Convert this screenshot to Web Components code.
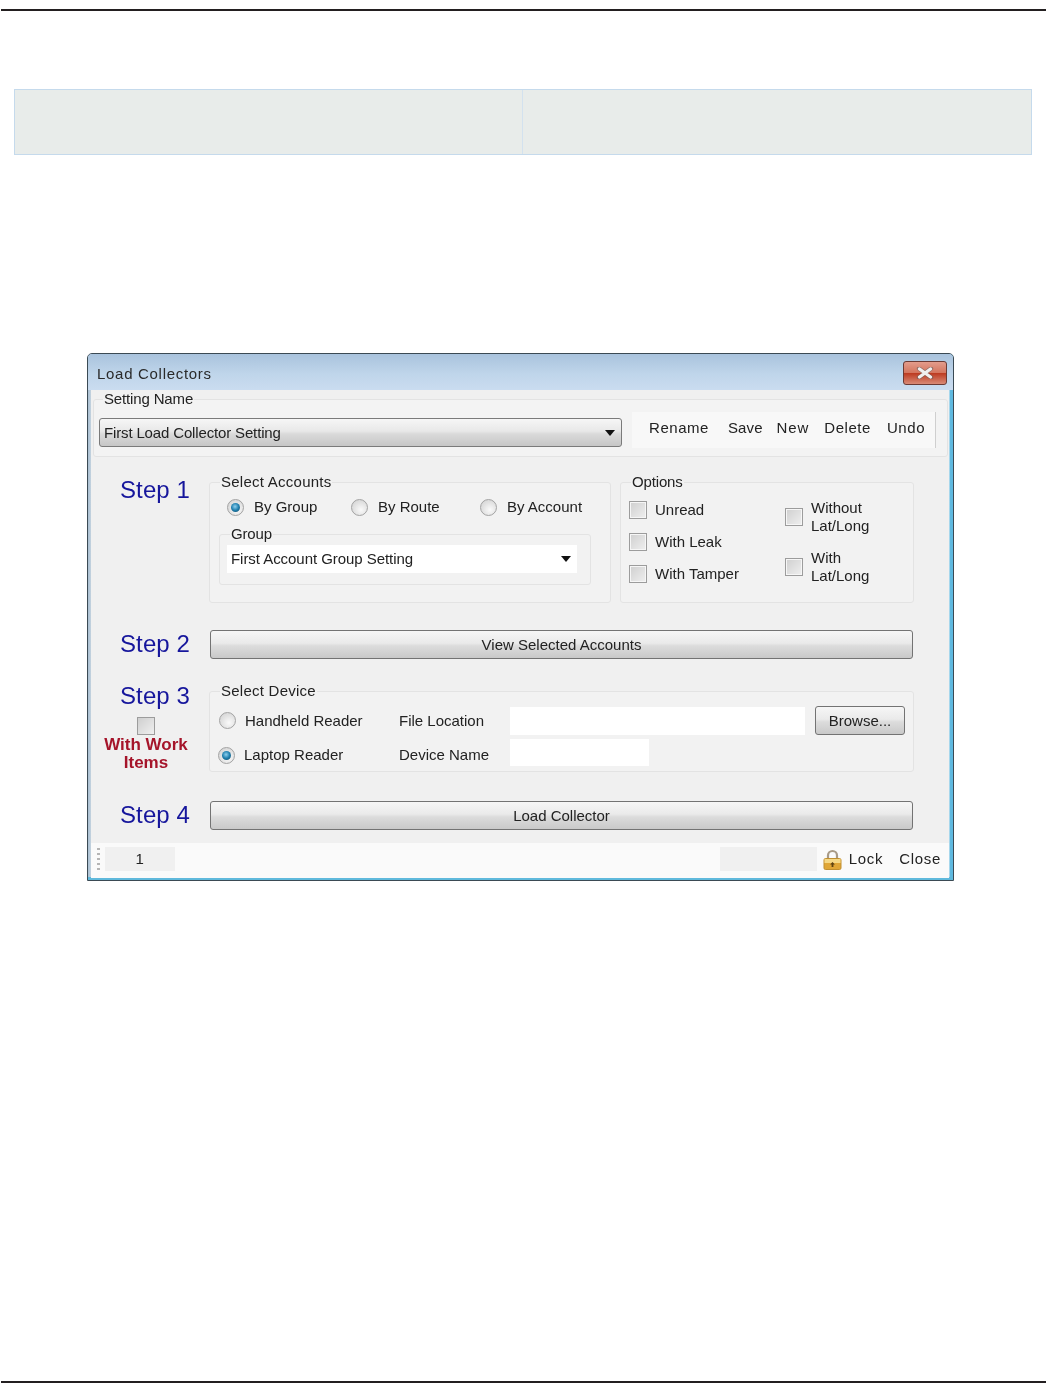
<!DOCTYPE html>
<html lang="en">
<head>
<meta charset="utf-8">
<title>Load Collectors</title>
<style>
  html, body { margin: 0; background: #fff; }
  body { font: 15px/18px "Liberation Sans", Arial, sans-serif; color: #222; }
</style>
</head>
<body>
<doc-page>
  <doc-table></doc-table>
  <lc-window title="Load Collectors">
    <lc-setting-bar></lc-setting-bar>
    <lc-steps></lc-steps>
    <lc-status></lc-status>
  </lc-window>
</doc-page>

<script>
// Small helper so every element below stays short
function shadow(el, html) {
  el.attachShadow({ mode: "open" }).innerHTML = html;
}

// Page with the two rules of the manual page
class DocPage extends HTMLElement {
  constructor() {
    super();
    shadow(this, `
      <style>
        :host { display: flex; flex-direction: column; height: 1383px; box-sizing: border-box; padding-top: 9px; }
        .rule { height: 2px; background: #231f20; margin-left: 1px; flex: none; }
        .body { flex: 1; }
      </style>
      <div class="rule"></div>
      <div class="body"><slot></slot></div>
      <div class="rule"></div>
    `);
  }
}

// Empty two cell table above the screenshot
class DocTable extends HTMLElement {
  constructor() {
    super();
    shadow(this, `
      <style>
        :host {
          display: grid; grid-template-columns: 507px 1fr; height: 66px; box-sizing: border-box;
          margin: 78px 14px 0 14px; background: #e8ecea;
          border: 1px solid #c5daec;
        }
        div + div { border-left: 1px solid #d3e2ef; }
      </style>
      <div></div><div></div>
    `);
  }
}

// Aero style window frame
class LcWindow extends HTMLElement {
  constructor() {
    super();
    const title = this.getAttribute("title") || "";
    shadow(this, `
      <style>
        :host {
          display: block; width: 867px; height: 528px; box-sizing: border-box;
          margin: 198px 0 0 87px; padding: 0 4px 3px 3px;
          border: 1px solid #3b4a54; border-radius: 5px 5px 0 0;
          background: linear-gradient(90deg, #a9bfd2 0, #c4d3df 3px, #eef5f9 calc(100% - 4px), #5fb9e0 calc(100% - 3px), #5fb9e0 100%);
          box-shadow: inset 0 -3px 0 #5fb9dc;
          filter: blur(0.5px);
        }
        .bar {
          height: 36px; display: flex; align-items: center; justify-content: space-between;
          margin: 0 -4px 0 -3px; padding: 3px 6px 0 9px; box-sizing: border-box;
          background: linear-gradient(#a9c3dd, #bfd5ea 55%, #cadcf0);
          border-radius: 4px 4px 0 0;
          letter-spacing: 0.7px; color: #2a2a2a;
        }
        .x {
          width: 44px; height: 24px; box-sizing: border-box; margin-top: -2px;
          display: flex; align-items: center; justify-content: center;
          border: 1px solid #6b3a34; border-radius: 3px;
          background: linear-gradient(#e39c8c, #d4765f 48%, #bd3c22 52%, #d98a76);
        }
        .client { background: #f0f0f0; height: 488px; display: flex; flex-direction: column; }
      </style>
      <div class="bar">
        <span>${title}</span>
        <span class="x"><svg width="18" height="12" viewBox="0 0 18 12"><path d="M3 1.5 L15 10.5 M15 1.5 L3 10.5" stroke="#5a5a5a" stroke-width="4.4" stroke-linecap="round" opacity=".55"/><path d="M3.5 2 L14.5 10 M14.5 2 L3.5 10" stroke="#f0f0f0" stroke-width="3.2" stroke-linecap="round"/></svg></span>
      </div>
      <div class="client"><slot></slot></div>
    `);
  }
}

// Fieldset with a legend on its top border
class LcGroup extends HTMLElement {
  constructor() {
    super();
    shadow(this, `
      <style>
        :host { display: block; box-sizing: border-box; }
        fieldset {
          margin: 0; height: 100%; box-sizing: border-box; min-width: 0;
          padding: var(--group-padding, 0);
          border: 1px solid #e3e3e3; border-radius: 3px;
          background: var(--group-bg, #f2f2f2);
        }
        legend {
          padding: 0 1px; margin-left: var(--legend-margin, 10px); line-height: 18px;
          letter-spacing: var(--legend-spacing, -0.15px);
        }
      </style>
      <fieldset>
        <legend>${this.getAttribute("label") || ""}</legend>
        <slot></slot>
      </fieldset>
    `);
  }
}

class LcRadio extends HTMLElement {
  constructor() {
    super();
    shadow(this, `
      <style>
        :host { display: flex; align-items: center; gap: var(--radio-gap, 10px); height: 18px; white-space: nowrap; }
        i {
          width: 17px; height: 17px; box-sizing: border-box; border-radius: 50%; flex: none;
          border: 1px solid #a3a3a3; display: flex; align-items: center; justify-content: center;
          background: radial-gradient(circle at 60% 65%, #fafafa, #d4d4d4 85%);
        }
        b { width: 9px; height: 9px; border-radius: 50%; background: radial-gradient(circle at 45% 40%, #8fd0ee, #1f7fae 50%, #12455f); }
      </style>
      <i>${this.hasAttribute("checked") ? "<b></b>" : ""}</i><span><slot></slot></span>
    `);
  }
}

class LcCheck extends HTMLElement {
  constructor() {
    super();
    shadow(this, `
      <style>
        :host { display: flex; align-items: center; gap: 8px; white-space: nowrap; }
        i {
          width: 18px; height: 18px; box-sizing: border-box; flex: none;
          border: 1px solid #9c9c9c; outline: 1px solid #f6f6f6; outline-offset: -2px;
          background: linear-gradient(135deg, #cfcfcf, #efefef);
        }
      </style>
      <i></i><span><slot></slot></span>
    `);
  }
}

class LcButton extends HTMLElement {
  constructor() {
    super();
    shadow(this, `
      <style>
        :host {
          display: flex; align-items: center; justify-content: center; box-sizing: border-box;
          height: 29px; border: 1px solid #737373; border-radius: 3px;
          background: linear-gradient(#f6f6f6, #eaeaea 45%, #dcdcdc 55%, #c9c9c9);
        }
      </style>
      <slot></slot>
    `);
  }
}

class LcCombo extends HTMLElement {
  constructor() {
    super();
    shadow(this, `
      <style>
        :host {
          display: flex; align-items: center; justify-content: space-between; box-sizing: border-box;
          height: 29px; padding: 0 6px 0 4px; border: 1px solid #7a7a7a; border-radius: 3px;
          letter-spacing: -0.15px;
          background: linear-gradient(#f6f6f6, #e8e8e8 45%, #dadada 55%, #c6c6c6);
        }
        :host([flat]) { border: 0; border-radius: 0; background: #fff; height: 28px; letter-spacing: -0.05px; }
        i { width: 0; height: 0; border: 5px solid transparent; border-top: 6px solid #111; border-bottom: 0; }
      </style>
      <span><slot></slot></span><i></i>
    `);
  }
}

// Top panel, setting name plus its tool strip
class LcSettingBar extends HTMLElement {
  constructor() {
    super();
    shadow(this, `
      <style>
        :host {
          display: block; margin: 0 0 0 2px; width: 855px;
          --group-bg: #f3f3f3; --group-padding: 4px 0 8px 5px; --legend-margin: 4px;
        }
        .row { display: flex; gap: 10px; }
        lc-combo { width: 523px; margin-top: 6px; }
        .strip {
          width: 304px; height: 36px; box-sizing: border-box; padding: 0 0 4px 3px;
          display: flex; align-items: center; background: #f8f8f8;
          letter-spacing: 0.55px; border-right: 1px solid #cfcfcf;
        }
        .grip { width: 3px; height: 22px; margin-right: 14px; background: repeating-linear-gradient(#b5b5b5 0 2px, transparent 2px 5px); }
        span { margin-right: 16px; }
        .rename { margin-right: 19px; }
        .save { margin-right: 14px; letter-spacing: 0.1px; }
        .new { letter-spacing: 0.9px; margin-right: 15px; }
      </style>
      <lc-group label="Setting Name">
        <div class="row">
          <lc-combo>First Load Collector Setting</lc-combo>
          <div class="strip">
            <div class="grip"></div>
            <span class="rename">Rename</span><span class="save">Save</span><span class="new">New</span><span>Delete</span><span>Undo</span>
          </div>
        </div>
      </lc-group>
    `);
  }
}

// The four numbered steps
class LcSteps extends HTMLElement {
  constructor() {
    super();
    shadow(this, `
      <style>
        :host {
          display: grid; grid-template-columns: 118px 705px; flex: 1; align-content: start;
          padding-top: 16px;
        }
        .step { font-size: 24px; letter-spacing: 0.1px; color: #16169c; padding-left: 29px; white-space: nowrap; }
        .s1 { line-height: 34px; }
        .s2 { line-height: 27px; }
        .s3 { line-height: 28px; }
        .gap2 { margin-top: 27px; }
        .gap3 { margin-top: 23px; }
        .gap4 { margin-top: 29px; }
        .wide { width: 703px; margin-left: 1px; }

        .top { display: grid; grid-template-columns: 402px 294px; gap: 9px; height: 130px; }
        .accounts { display: grid; grid-template-columns: 124px 129px 1fr; padding: 7px 0 0 17px; }
        .inner { --group-padding: 2px 0 0 7px; --legend-margin: 3px; --legend-spacing: -0.15px; width: 372px; height: 60px; margin: 9px 0 0 9px; }
        .inner lc-combo { width: 350px; }
        .select { --legend-spacing: 0.25px; }

        .options { display: grid; grid-template-columns: 156px 1fr; padding: 3px 0 0 8px; }
        .col { display: grid; grid-auto-rows: 32px; align-items: center; }
        .col2 { display: grid; gap: 14px; align-content: start; padding-top: 5px; }

        .work { width: 110px; height: 62px; box-sizing: border-box; padding-top: 7px; text-align: center; }
        .work i {
          display: block; width: 18px; height: 18px; box-sizing: border-box; margin: 0 auto;
          border: 1px solid #9c9c9c; background: linear-gradient(135deg, #cfcfcf, #efefef);
        }
        .work b { display: block; margin-top: 1px; font-size: 17px; color: #a5142a; }

        .device {
          --radio-gap: 9px;
          display: grid; grid-template-columns: 180px 111px 295px 90px;
          grid-template-rows: 29px 32px; row-gap: 4px; padding: 6px 0 0 9px; align-items: center;
        }
        .device .in { background: #fff; height: 28px; }
        .device .in2 { width: 139px; height: 27px; align-self: start; }
        .device .b { margin-left: 10px; width: 90px; }
        .device .laptop { margin-left: -1px; }
        .device-group { height: 90px; }
      </style>

      <div class="step s1">Step 1</div>
      <div class="top">
        <lc-group class="select" label="Select Accounts">
          <div class="accounts">
            <lc-radio checked>By Group</lc-radio>
            <lc-radio>By Route</lc-radio>
            <lc-radio>By Account</lc-radio>
          </div>
          <lc-group class="inner" label="Group">
            <lc-combo flat>First Account Group Setting</lc-combo>
          </lc-group>
        </lc-group>
        <lc-group label="Options">
          <div class="options">
            <div class="col">
              <lc-check>Unread</lc-check>
              <lc-check>With Leak</lc-check>
              <lc-check>With Tamper</lc-check>
            </div>
            <div class="col2">
              <lc-check>Without<br>Lat/Long</lc-check>
              <lc-check>With<br>Lat/Long</lc-check>
            </div>
          </div>
        </lc-group>
      </div>

      <div class="step s2 gap2">Step 2</div>
      <lc-button class="gap2 wide">View Selected Accounts</lc-button>

      <div class="gap3">
        <div class="step s3">Step 3</div>
        <div class="work"><i></i><b>With Work<br>Items</b></div>
      </div>
      <lc-group class="gap3 select device-group" label="Select Device">
        <div class="device">
          <lc-radio>Handheld Reader</lc-radio>
          <span>File Location</span>
          <div class="in"></div>
          <lc-button class="b">Browse...</lc-button>
          <lc-radio class="laptop" checked>Laptop Reader</lc-radio>
          <span>Device Name</span>
          <div class="in in2"></div>
        </div>
      </lc-group>

      <div class="step s2 gap4">Step 4</div>
      <lc-button class="gap4 wide">Load Collector</lc-button>
    `);
  }
}

// Bottom status strip
class LcStatus extends HTMLElement {
  constructor() {
    super();
    shadow(this, `
      <style>
        :host {
          display: flex; align-items: center; height: 35px; box-sizing: border-box; flex: none;
          padding: 0 8px 3px 6px; background: #fafafa; letter-spacing: 0.7px;
        }
        .grip { width: 3px; height: 22px; margin-right: 5px; background: repeating-linear-gradient(#b5b5b5 0 2px, transparent 2px 5px); }
        .cell { height: 24px; line-height: 24px; background: #f0f0f0; }
        .n { width: 70px; text-align: center; }
        .fill { flex: 1; }
        .m { width: 97px; }
        svg { margin: 0 7px 0 6px; flex: none; }
        .close { margin-left: 16px; }
      </style>
      <div class="grip"></div>
      <div class="cell n">1</div>
      <div class="fill"></div>
      <div class="cell m"></div>
      <svg width="19" height="21" viewBox="0 0 19 21">
        <path d="M5 10 V6.5 a4.5 4.5 0 0 1 9 0 V10" fill="none" stroke="#a89a86" stroke-width="2.2"/>
        <rect x="1" y="9.5" width="17" height="11" rx="1.5" fill="#e0a636" stroke="#c08f30"/>
        <rect x="1.5" y="10" width="16" height="4" fill="#f5d885"/>
        <path d="M9.5 13 l2.4 2.6 H10.4 V18 H8.6 V15.6 H7.1 Z" fill="#5e4312"/>
      </svg>
      <span>Lock</span>
      <span class="close">Close</span>
    `);
  }
}

// Register custom elements
customElements.define("doc-page", DocPage);
customElements.define("doc-table", DocTable);
customElements.define("lc-window", LcWindow);
customElements.define("lc-group", LcGroup);
customElements.define("lc-radio", LcRadio);
customElements.define("lc-check", LcCheck);
customElements.define("lc-button", LcButton);
customElements.define("lc-combo", LcCombo);
customElements.define("lc-setting-bar", LcSettingBar);
customElements.define("lc-steps", LcSteps);
customElements.define("lc-status", LcStatus);
</script>
</body>
</html>
